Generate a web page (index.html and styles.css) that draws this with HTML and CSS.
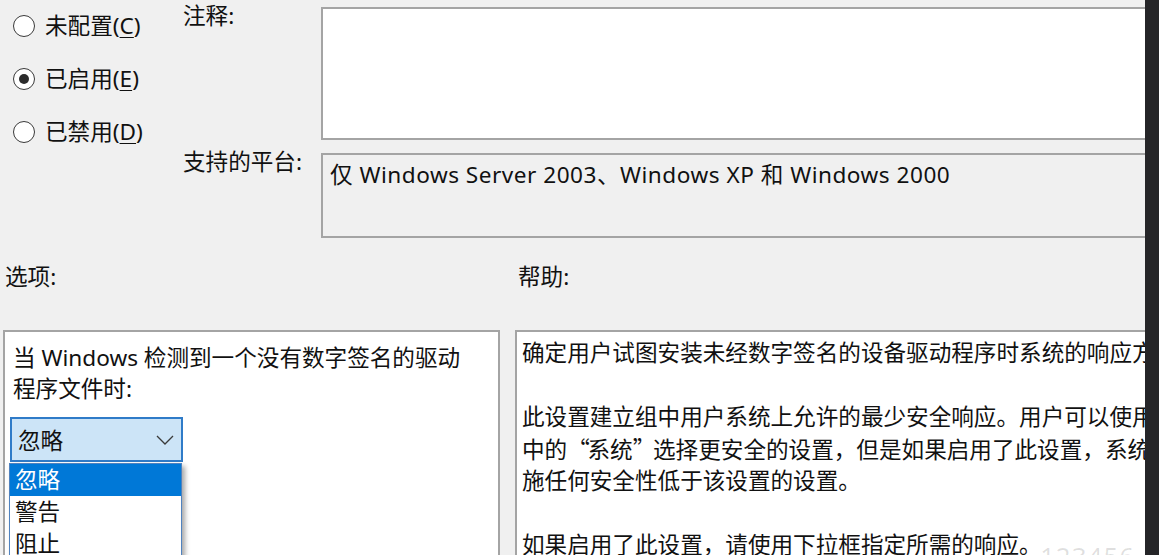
FILE: index.html
```html
<!DOCTYPE html>
<html lang="zh-CN">
<head>
<meta charset="utf-8">
<title>策略设置</title>
<link rel="stylesheet" href="styles.css">
</head>
<body>
<div class="screen">
  <div class="main">
    <div class="top">
      <div class="radios">
        <div class="radio"><span class="circle"></span><span>未配置(<u>C</u>)</span></div>
        <div class="radio"><span class="circle checked"></span><span>已启用(<u>E</u>)</span></div>
        <div class="radio"><span class="circle"></span><span>已禁用(<u>D</u>)</span></div>
      </div>
      <div class="field-label">注释:</div>
      <div class="comment"></div>
      <div class="field-label">支持的平台:</div>
      <div class="platform">仅 Windows Server 2003、Windows XP 和 Windows 2000</div>
    </div>
    <div class="bottom">
      <div class="section-label">选项:</div>
      <div class="section-label help-label">帮助:</div>
      <div class="options">
        <div class="options-text">当 Windows 检测到一个没有数字签名的驱动<br>程序文件时:</div>
        <div class="combo">
          <span>忽略</span>
          <svg class="chevron" width="18" height="10" viewBox="0 0 18 10"><path d="M1 1 L9 9 L17 1" fill="none" stroke="#3a3a3a" stroke-width="1.3"/></svg>
        </div>
        <div class="dropdown">
          <div class="item selected">忽略</div>
          <div class="item">警告</div>
          <div class="item">阻止</div>
        </div>
      </div>
      <div class="help">
        <div class="line">确定用户试图安装未经数字签名的设备驱动程序时系统的响应方式。</div>
        <div class="line blank"></div>
        <div class="line">此设置建立组中用户系统上允许的最少安全响应。用户可以使用控制面板</div>
        <div class="line">中的<span class="q">“</span>系统<span class="q">”</span>选择更安全的设置，但是如果启用了此设置，系统将不实</div>
        <div class="line">施任何安全性低于该设置的设置。</div>
        <div class="line blank"></div>
        <div class="line">如果启用了此设置，请使用下拉框指定所需的响应。</div>
      </div>
    </div>
    <div class="watermark">123456</div>
  </div>
  <div class="strip"></div>
</div>
</body>
</html>
```

FILE: styles.css
```css
* { box-sizing: border-box; }

html, body {
  margin: 0;
  padding: 0;
  height: 100%;
}

body {
  background: #f0f0f0;
  font-family: "Noto Sans", "Noto Sans CJK SC", sans-serif;
  font-size: 22.6px;
  color: #111;
  overflow: hidden;
}

.screen {
  display: flex;
  height: 555px;
  width: 1159px;
}

.main {
  flex: 1;
  position: relative;
  overflow: hidden;
}

.strip {
  width: 14px;
  background: #252528;
}

/* top section */
.top {
  width: 1220px;
  display: grid;
  grid-template-columns: 183px 138px 1fr;
  grid-template-rows: 133px 85px;
  row-gap: 13px;
  padding-top: 7px;
}

.radios {
  grid-column: 1;
  grid-row: 1 / 3;
  margin-top: -7.5px;
  display: flex;
  flex-direction: column;
}

.radio {
  height: 53px;
  display: flex;
  align-items: center;
  gap: 10px;
  padding-left: 13px;
  line-height: 30px;
}

.radio u {
  text-underline-offset: 3px;
  text-decoration-thickness: 1px;
}

.circle {
  width: 22px;
  height: 22px;
  border: 1.5px solid #3a3a3a;
  border-radius: 50%;
  background: #fff;
  display: flex;
  align-items: center;
  justify-content: center;
}

.circle.checked::after {
  content: "";
  width: 10px;
  height: 10px;
  border-radius: 50%;
  background: #2b2b2b;
}

.field-label {
  grid-column: 2;
  line-height: 30px;
  margin-top: -6px;
}

.comment {
  grid-column: 3;
  background: #fff;
  border: 2px solid #a4a4a4;
}

.platform {
  grid-column: 3;
  background: #f0f0f0;
  border: 2px solid #a4a4a4;
  padding: 5px 7px;
  line-height: 30px;
  letter-spacing: 0.5px;
}

/* bottom section */
.bottom {
  width: 1240px;
  display: grid;
  grid-template-columns: 497px 1fr;
  grid-template-rows: 30px 260px;
  column-gap: 15px;
  row-gap: 38px;
  padding-left: 3px;
  margin-top: 24px;
}

.section-label {
  line-height: 30px;
  margin-left: 2px;
}

.help-label {
  margin-left: 3px;
}

.options {
  position: relative;
  background: #fff;
  border: 2px solid #a4a4a4;
  padding: 10px 8px 0 5px;
}

.options-text {
  line-height: 31px;
  margin-left: 3px;
}

.combo {
  margin-top: 13px;
  width: 173px;
  height: 45px;
  background: #cce4f7;
  border: 2px solid #2f7bc8;
  display: flex;
  align-items: center;
  justify-content: space-between;
  padding: 0 7px 0 6px;
}

.chevron {
  display: block;
}

.dropdown {
  position: absolute;
  left: 4px;
  top: 131px;
  width: 173px;
  background: #fff;
  border: 1px solid #4f82bf;
  box-shadow: 3px 3px 5px rgba(0, 0, 0, 0.35);
  z-index: 2;
}

.item {
  height: 32px;
  line-height: 32px;
  padding-left: 5px;
}

.item.selected {
  background: #0078d7;
  color: #fff;
}

.help {
  background: #fff;
  border: 2px solid #a4a4a4;
  padding: 5px 5px 0 5px;
}

.line {
  white-space: nowrap;
  line-height: 32px;
  height: 32px;
}

.q {
  font-family: "Noto Sans CJK SC", sans-serif;
  display: inline-block;
  width: 0.9em;
  text-align: center;
}

.watermark {
  position: absolute;
  left: 1040px;
  top: 538px;
  font-size: 26px;
  color: rgba(0, 0, 0, 0.12);
  letter-spacing: 1px;
  z-index: 3;
}
```
